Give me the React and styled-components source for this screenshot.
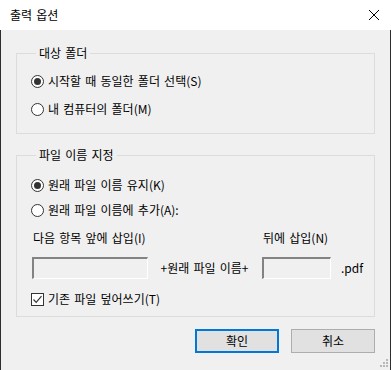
import React from 'react'
import styled, { createGlobalStyle } from 'styled-components'

const GlobalStyle = createGlobalStyle`
  html, body {
    margin: 0;
    padding: 0;
    background: #f0f0f0;
  }
  body {
    font-family: 'Noto Sans CJK KR', 'Noto Sans', sans-serif;
    font-size: 12px;
    word-spacing: 1.5px;
    color: #000;
  }
`

const Window = styled.div`
  width: 391px;
  height: 370px;
  display: flex;
  flex-direction: column;
  overflow: hidden;
`

const TitleBar = styled.div`
  height: 30px;
  flex: none;
  background: #fff;
  display: flex;
  align-items: center;
  justify-content: space-between;
  padding: 0 9px 0 10px;
  line-height: 16px;
`

const CloseIcon = styled.svg`
  width: 12px;
  height: 12px;
  margin-right: 2px;
`

const Body = styled.div`
  position: relative;
  flex: 1;
  background: #f0f0f0;
  border-left: 1px solid #2e2e2e;
  border-right: 1px solid #2e2e2e;
  padding: 15px 15px 0;
`

const Group = styled.fieldset`
  margin: ${(p) => p.$top || 0}px 0 0;
  padding: ${(p) => p.$padTop}px 14px ${(p) => p.$padBottom}px;
  border: 1px solid #dcdcdc;
  min-width: 0;
`

const Legend = styled.legend`
  margin-left: 5px;
  padding: 0 3px;
  line-height: 16px;
`

const OptionRow = styled.label`
  display: flex;
  align-items: center;
  gap: 4px;
  height: 20px;
  line-height: 16px;
  margin-top: ${(p) => p.$gap || 0}px;
`

const RadioMark = styled.span`
  width: 13px;
  height: 13px;
  box-sizing: border-box;
  border: 1px solid #333;
  border-radius: 50%;
  background: #fff;
  display: flex;
  align-items: center;
  justify-content: center;
  flex: none;

  &::after {
    content: '';
    width: 7px;
    height: 7px;
    border-radius: 50%;
    background: #333;
    display: ${(p) => (p.$checked ? 'block' : 'none')};
  }
`

const CheckMark = styled.span`
  width: 13px;
  height: 13px;
  box-sizing: border-box;
  border: 1px solid #333;
  background: #fff;
  display: flex;
  align-items: center;
  justify-content: center;
  flex: none;
`

const FieldGrid = styled.div`
  display: grid;
  grid-template-columns: 116px 114px 69px auto;
  align-items: center;
  margin-top: ${(p) => p.$gap || 0}px;
  padding-left: 1px;
  line-height: 16px;
`

const FieldLabel = styled.span`
  grid-column: ${(p) => p.$col};
  padding-left: ${(p) => p.$indent || 0}px;
`

const TextBox = styled.div`
  height: 22px;
  box-sizing: border-box;
  border-style: solid;
  border-width: 2px 1px 1px 2px;
  border-color: #838383 #fff #fff #838383;
  background: #f0f0f0;
`

const Joiner = styled.span`
  text-align: center;
  padding-right: 1px;
`

const Suffix = styled.span`
  padding-left: 10px;
`

const ButtonRow = styled.div`
  display: flex;
  justify-content: flex-end;
  gap: 12px;
  margin-top: 12px;
`

const Button = styled.button`
  width: 84px;
  height: 24px;
  box-sizing: border-box;
  font: inherit;
  line-height: 16px;
  color: #000;
  background: #e1e1e1;
  border: ${(p) => (p.$primary ? '2px solid #0078d7' : '1px solid #adadad')};
  padding: 0;
`

const Grip = styled.svg`
  position: absolute;
  right: 2px;
  bottom: 3px;
  width: 9px;
  height: 9px;
`

const App = () => (
  <Window>
    <GlobalStyle />
    <TitleBar>
      <span>출력 옵션</span>
      <CloseIcon viewBox="0 0 12 12">
        <path d="M1 1L11 11M11 1L1 11" stroke="#000" strokeWidth="1" fill="none" />
      </CloseIcon>
    </TitleBar>
    <Body>
      <Group $padTop={10} $padBottom={14}>
        <Legend>대상 폴더</Legend>
        <OptionRow>
          <RadioMark $checked />
          시작할 때 동일한 폴더 선택(S)
        </OptionRow>
        <OptionRow $gap={8}>
          <RadioMark />
          내 컴퓨터의 폴더(M)
        </OptionRow>
      </Group>

      <Group $top={13} $padTop={12} $padBottom={7}>
        <Legend>파일 이름 지정</Legend>
        <OptionRow>
          <RadioMark $checked />
          원래 파일 이름 유지(K)
        </OptionRow>
        <OptionRow $gap={5}>
          <RadioMark />
          원래 파일 이름에 추가(A):
        </OptionRow>
        <FieldGrid $gap={10}>
          <FieldLabel $col="1 / 3" $indent={1}>다음 항목 앞에 삽입(I)</FieldLabel>
          <FieldLabel $col="3 / 5" $indent={1}>뒤에 삽입(N)</FieldLabel>
        </FieldGrid>
        <FieldGrid $gap={11}>
          <TextBox />
          <Joiner>+원래 파일 이름+</Joiner>
          <TextBox />
          <Suffix>.pdf</Suffix>
        </FieldGrid>
        <OptionRow $gap={10}>
          <CheckMark>
            <svg width="11" height="11" viewBox="0 0 11 11">
              <path d="M1.5 5.5L4.2 8.3L9.5 2.2" stroke="#333" strokeWidth="1.2" fill="none" />
            </svg>
          </CheckMark>
          기존 파일 덮어쓰기(T)
        </OptionRow>
      </Group>

      <ButtonRow>
        <Button $primary>확인</Button>
        <Button>취소</Button>
      </ButtonRow>

      <Grip viewBox="0 0 9 9">
        <g fill="#b8b8b8">
          <rect x="7" y="1" width="2" height="2" />
          <rect x="4" y="4" width="2" height="2" />
          <rect x="7" y="4" width="2" height="2" />
          <rect x="1" y="7" width="2" height="2" />
          <rect x="4" y="7" width="2" height="2" />
          <rect x="7" y="7" width="2" height="2" />
        </g>
      </Grip>
    </Body>
  </Window>
)

export default App
